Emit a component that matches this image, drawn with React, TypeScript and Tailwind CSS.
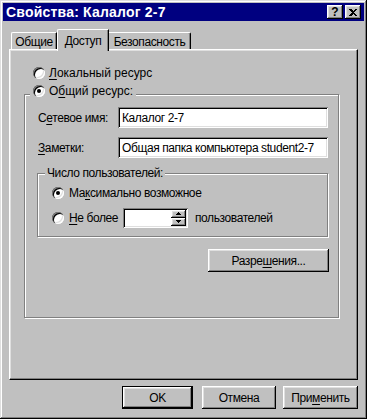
import React from 'react';

const raised = 'shadow-[inset_-1px_-1px_#000,inset_1px_1px_#fff,inset_-2px_-2px_#808080,inset_2px_2px_#dfdfdf]';
const sunken = 'shadow-[inset_1px_1px_#808080,inset_-1px_-1px_#fff,inset_2px_2px_#000,inset_-2px_-2px_#dfdfdf]';
const etched = 'border border-[#808080] shadow-[1px_1px_0_#fff,inset_1px_1px_0_#fff]';

function Radio({ checked = false }: { checked?: boolean }) {
  return (
    <span className="w-[12px] h-[12px] shrink-0 rounded-full bg-white flex items-center justify-center shadow-[inset_1px_1px_#808080,inset_2px_2px_#000,inset_-1px_-1px_#fff,inset_-2px_-2px_#dfdfdf]">
      {checked ? <span className="w-[4px] h-[4px] rounded-full bg-black" /> : null}
    </span>
  );
}

function U({ children }: { children: React.ReactNode }) {
  return <span className="underline underline-offset-[2px] decoration-1">{children}</span>;
}

function Button({ children, width, isDefault = false }: { children: React.ReactNode; width: string; isDefault?: boolean }) {
  return (
    <div className={`${width} h-[23px] flex items-center justify-center bg-[#c0c0c0] ${isDefault ? 'border border-black' : ''} ${raised}`}>
      {children}
    </div>
  );
}

function TextField({ value, width }: { value: string; width: string }) {
  return (
    <div className={`${width} h-[21px] bg-white flex items-center pl-[4px] ${sunken}`}>{value}</div>
  );
}

export default function App() {
  return (
    <div className="w-[367px] h-[419px] p-[3px] flex flex-col bg-[#c0c0c0] text-black text-[12px] tracking-[-0.4px] leading-none font-['Liberation_Sans',Arial,sans-serif] shadow-[inset_-1px_-1px_#000,inset_1px_1px_#dfdfdf,inset_-2px_-2px_#808080,inset_2px_2px_#fff]">
      {/* title bar */}
      <div className="h-[18px] bg-[#000080] flex items-center pl-[3px] pr-[3px]">
        <span className="text-white font-bold text-[14px] tracking-[0.2px]">Свойства: Калалог 2-7</span>
        <div className="ml-auto flex gap-[2px]">
          <div className={`w-[16px] h-[14px] bg-[#c0c0c0] flex items-center justify-center font-bold text-[12px] tracking-normal ${raised}`}>?</div>
          <div className={`w-[16px] h-[14px] bg-[#c0c0c0] flex items-center justify-center ${raised}`}>
            <svg width="8" height="7" viewBox="0 0 8 7" shapeRendering="crispEdges">
              <path d="M0 0h2l2 2 2-2h2L5 3.5 8 7H6L4 5 2 7H0l3-3.5z" fill="#000" />
            </svg>
          </div>
        </div>
      </div>

      <div className="flex-1 flex flex-col px-[6px] pt-[8px]">
        {/* tabs */}
        <div className="h-[20px] flex items-end pl-[2px]">
          <div className="w-[46px] h-[17px] flex items-center justify-center pt-[1px] border-t border-l border-white border-r border-r-black rounded-tl-[2px] shadow-[inset_-1px_0_#808080]">Общие</div>
          <div className="relative z-10 w-[52px] h-[22px] -mb-[2px] flex justify-center pt-[5px] bg-[#c0c0c0] border-t border-l border-white border-r border-r-black rounded-tl-[2px] shadow-[inset_-1px_0_#808080]">Доступ</div>
          <div className="w-[82px] h-[17px] flex items-center justify-center pt-[1px] border-t border-white border-r border-r-black rounded-tr-[2px] shadow-[inset_-1px_0_#808080]">Безопасность</div>
        </div>

        {/* tab panel */}
        <div className="h-[331px] flex flex-col border-t border-l border-white border-r border-b border-r-black border-b-black shadow-[inset_-1px_-1px_#808080,inset_1px_1px_#dfdfdf]">
          <div className="mt-[14px] h-[18px] flex items-center gap-[4px] pl-[23px]">
            <Radio />
            <span className="tracking-normal"><U>Л</U>окальный ресурс</span>
          </div>

          <div className={`mt-[12px] ml-[14px] w-[315px] h-[224px] flex flex-col ${etched}`}>
            <div className="-mt-[13px] ml-[5px] w-fit h-[18px] px-[3px] flex items-center gap-[4px] bg-[#c0c0c0]">
              <Radio checked />
              <span className="tracking-normal">О<U>б</U>щий ресурс:</span>
            </div>

            <div className="mt-[7px] h-[21px] flex items-center pl-[13px]">
              <span className="w-[80px]">С<U>е</U>тевое имя:</span>
              <TextField value="Калалог 2-7" width="w-[210px]" />
            </div>
            <div className="mt-[9px] h-[21px] flex items-center pl-[13px]">
              <span className="w-[80px]"><U>З</U>аметки:</span>
              <TextField value="Общая папка компьютера student2-7" width="w-[210px]" />
            </div>

            <div className={`mt-[15px] ml-[12px] w-[291px] h-[64px] flex flex-col ${etched}`}>
              <div className="-mt-[8px] ml-[7px] w-fit h-[14px] px-[2px] flex items-center bg-[#c0c0c0]">Число пользователей:</div>
              <div className="mt-[5px] h-[16px] flex items-center gap-[5px] pl-[14px]">
                <Radio checked />
                <span>Ма<U>к</U>симально возможное</span>
              </div>
              <div className="mt-[6px] h-[21px] flex items-center pl-[14px]">
                <Radio />
                <span className="ml-[5px] w-[54px]"><U>Н</U>е более</span>
                <div className={`w-[65px] h-[20px] bg-white flex justify-end items-center pr-[2px] ${sunken}`}>
                  <div className="flex flex-col">
                    <div className={`w-[15px] h-[8px] bg-[#c0c0c0] flex items-center justify-center ${raised}`}>
                      <svg width="5" height="3" viewBox="0 0 5 3" shapeRendering="crispEdges"><path d="M2 0h1v1h1v1h1v1H0V2h1V1h1z" fill="#000" /></svg>
                    </div>
                    <div className={`w-[15px] h-[8px] bg-[#c0c0c0] flex items-center justify-center ${raised}`}>
                      <svg width="5" height="3" viewBox="0 0 5 3" shapeRendering="crispEdges"><path d="M0 0h5v1H4v1H3v1H2V2H1V1H0z" fill="#000" /></svg>
                    </div>
                  </div>
                </div>
                <span className="ml-[7px]">пользователей</span>
              </div>
            </div>

            <div className="mt-[12px] self-end mr-[9px]">
              <Button width="w-[121px]">Разре<U>ш</U>ения...</Button>
            </div>
          </div>
        </div>

        {/* dialog buttons */}
        <div className="mt-[6px] flex justify-end">
          <div className="mr-[9px]"><Button width="w-[71px]" isDefault>OK</Button></div>
          <div className="mr-[7px]"><Button width="w-[74px]">Отмена</Button></div>
          <Button width="w-[75px]">При<U>м</U>енить</Button>
        </div>
      </div>
    </div>
  );
}
